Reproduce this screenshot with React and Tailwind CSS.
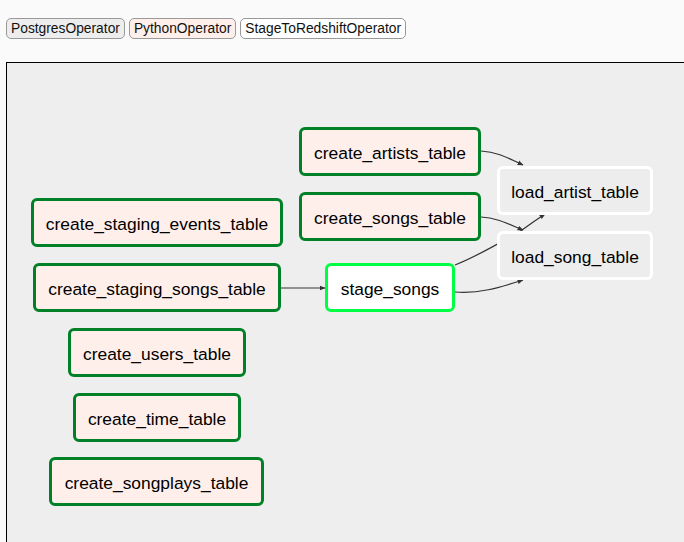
import React from 'react';

const legend = [
  { name: 'PostgresOperator', bg: 'bg-[#ededed]' },
  { name: 'PythonOperator', bg: 'bg-[#ffefeb]' },
  { name: 'StageToRedshiftOperator', bg: 'bg-white' },
];

// page coordinates of each task box (x, y, w, h)
const nodes = [
  { id: 'create_artists_table', x: 299, y: 127, w: 182, h: 49, kind: 'python' },
  { id: 'create_songs_table', x: 299, y: 192, w: 182, h: 49, kind: 'python' },
  { id: 'load_artist_table', x: 497, y: 166, w: 156, h: 49, kind: 'load' },
  { id: 'load_song_table', x: 497, y: 231, w: 156, h: 49, kind: 'load' },
  { id: 'create_staging_events_table', x: 31, y: 198, w: 252, h: 49, kind: 'python' },
  { id: 'create_staging_songs_table', x: 33, y: 263, w: 248, h: 49, kind: 'python' },
  { id: 'stage_songs', x: 325, y: 263, w: 130, h: 49, kind: 'stage' },
  { id: 'create_users_table', x: 68, y: 328, w: 178, h: 49, kind: 'python' },
  { id: 'create_time_table', x: 73, y: 393, w: 168, h: 49, kind: 'python' },
  { id: 'create_songplays_table', x: 49, y: 457, w: 215, h: 49, kind: 'python' },
];

const kindClass = {
  python: 'bg-[#ffefeb] border-[#008027]',
  load: 'bg-[#ededed] border-white',
  stage: 'bg-white border-[#00ff44]',
};

const edges = [
  'M281,288 L325,288',
  'M481,151 C498,152 508,158 523,165',
  'M481,217 C498,218 508,224 523,230',
  'M455,265 C480,255 505,240 522,230 Q533,222 545,214',
  'M455,292 C478,294 498,288 523,280',
];

function Node({ node }) {
  return (
    <div
      className={`absolute flex items-center justify-center rounded-[6px] border-[3px] pt-[3px] text-[17.4px] text-black whitespace-nowrap ${kindClass[node.kind]}`}
      style={{ left: node.x - 7, top: node.y - 63, width: node.w, height: node.h }}
    >
      {node.id}
    </div>
  );
}

export default function App() {
  return (
    <div className="h-[542px] w-[684px] overflow-hidden bg-[#fafafa] font-['Liberation_Sans',Arial,sans-serif]">
      <div className="flex gap-[4px] pl-[6px] pt-[18px]">
        {legend.map((l) => (
          <span
            key={l.name}
            className={`rounded-[5px] border border-[#999] px-[4px] text-[13.8px] leading-[19px] text-[#111] ${l.bg}`}
          >
            {l.name}
          </span>
        ))}
      </div>

      <div className="relative ml-[6px] mt-[23px] h-[520px] w-[720px] border border-black bg-[#eeeeee]">
        <svg className="absolute left-0 top-0" width="720" height="520">
          <defs>
            <marker id="arrow" viewBox="0 0 10 10" refX="9" refY="5" markerWidth="5" markerHeight="5" orient="auto">
              <path d="M0,1 L10,5 L0,9 z" fill="#333" />
            </marker>
          </defs>
          <g transform="translate(-7,-63)" fill="none" stroke="#333" strokeWidth="1.2">
            {edges.map((d, i) => (
              <path key={i} d={d} markerEnd="url(#arrow)" />
            ))}
          </g>
        </svg>
        {nodes.map((n) => (
          <Node key={n.id} node={n} />
        ))}
      </div>
    </div>
  );
}
